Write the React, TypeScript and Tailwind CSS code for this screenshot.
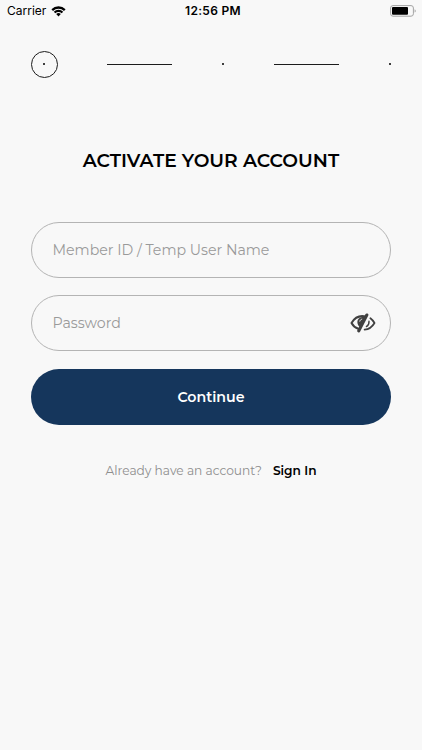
import { useState } from "react";
import type { ReactNode } from "react";

function WifiIcon() {
  return (
    <svg className="w-[15px] h-[11px]" viewBox="0 0 15 11" aria-hidden="true">
      <path d="M0.4 3.2a10.2 10.2 0 0 1 14.2 0l-1.6 1.7a7.9 7.9 0 0 0-11 0z" />
      <path d="M2.8 5.7a6.7 6.7 0 0 1 9.4 0l-1.5 1.6a4.6 4.6 0 0 0-6.4 0z" />
      <path d="M5.2 8.1a3.3 3.3 0 0 1 4.6 0L7.5 10.5z" />
    </svg>
  );
}

function BatteryIcon() {
  return (
    <svg className="w-[27px] h-[12px]" viewBox="0 0 27 12" aria-hidden="true">
      <rect x="0.6" y="0.6" width="22.8" height="10.6" rx="2.4" fill="none" stroke="#a3a3a3" />
      <rect x="2" y="2" width="16" height="7.8" rx="1" />
      <path d="M24.6 4.2c1.5.5 1.5 2.9 0 3.4z" fill="#a3a3a3" />
    </svg>
  );
}

function HiddenEyeIcon() {
  return (
    <svg
      className="w-[26px] h-[20px]"
      viewBox="0 0 26 20"
      fill="none"
      stroke="#404040"
      strokeWidth="2"
      strokeLinecap="round"
      strokeLinejoin="round"
      aria-hidden="true"
    >
      <path d="M15.5 3.5C8.8 2 4 5.8 1.5 10c1.6 2.9 4 4.9 6.8 5.8" />
      <path d="M15.2 4.2C10.2 3.3 7.2 6 7.4 9.5c.1 1.9.9 3.3 2.3 4.4z" fill="#404040" stroke="none" />
      <path d="M11.8 6.2c-1.2.3-1.8 1-2 2" stroke="#f8f8f8" strokeWidth="0.9" />
      <path d="M16.8 2 8.8 17.8" strokeWidth="3.1" />
      <path d="M20.4 5.2c1.7 1.2 3 2.8 4.1 4.8-2.3 3.9-5.5 6.3-9.9 6.7" strokeWidth="1.8" />
      <path d="M19 8.2c.2 2.3-.7 4.2-2.6 5.4" strokeWidth="1.4" />
    </svg>
  );
}

function StatusBar() {
  return (
    <header className="h-[22px] grid grid-cols-[1fr_auto_1fr] items-center pl-[7px] pr-[5px] text-[12px] font-['Inter',sans-serif]">
      <div className="flex items-center gap-[5px]">
        <span>Carrier</span>
        <WifiIcon />
      </div>
      <span className="ml-[2px] font-semibold tracking-[0.3px]">12:56 PM</span>
      <div className="flex justify-end">
        <BatteryIcon />
      </div>
    </header>
  );
}

function StepDot() {
  return <span className="w-[2px] h-[2px] rounded-full bg-black" />;
}

function StepLine() {
  return <span className="w-[65px] h-[1.3px] bg-[#1c1c1c]" />;
}

function Steps() {
  return (
    <div className="flex items-center justify-between mt-[29px] mx-[31px]">
      <span className="w-[26.5px] h-[26.5px] rounded-full border-[1.3px] border-[#1c1c1c] flex items-center justify-center">
        <StepDot />
      </span>
      <StepLine />
      <StepDot />
      <StepLine />
      <StepDot />
    </div>
  );
}

interface FieldProps {
  label: string;
  children?: ReactNode;
}

function Field({ label, children }: FieldProps) {
  return (
    <label className="h-14 rounded-full border border-[#b4b4b4] flex items-center justify-between pl-[20.5px] pr-[14px]">
      <span className="-mt-px text-[14.2px] leading-5 text-[#9a9a9a] whitespace-nowrap">
        {label}
      </span>
      {children}
    </label>
  );
}

export default function App() {
  const [visible, setVisible] = useState(false);

  return (
    <main className="h-screen overflow-hidden bg-[#f8f8f8] text-black font-['Montserrat','Inter',sans-serif]">
      <StatusBar />
      <Steps />

      <h1 className="mt-[71.5px] text-center text-[18.7px] leading-6 font-semibold whitespace-nowrap">
        ACTIVATE YOUR ACCOUNT
      </h1>

      <form className="mt-[49px] mx-[31px] flex flex-col gap-[17.4px]">
        <Field label="Member ID / Temp User Name" />
        <Field label="Password">
          <button
            type="button"
            aria-label="Toggle password"
            aria-pressed={visible}
            onClick={() => setVisible(!visible)}
          >
            <HiddenEyeIcon />
          </button>
        </Field>
        <button
          type="button"
          className="h-14 pt-[2px] rounded-full bg-[#15365c] text-white text-[14.2px] font-semibold"
        >
          Continue
        </button>
      </form>

      <p className="mt-9 flex items-center justify-center gap-[11px] text-[12.2px] leading-5 whitespace-nowrap">
        <span className="text-[#8e8e8e]">Already have an account?</span>
        <a href="#" className="font-semibold">
          Sign In
        </a>
      </p>
    </main>
  );
}
